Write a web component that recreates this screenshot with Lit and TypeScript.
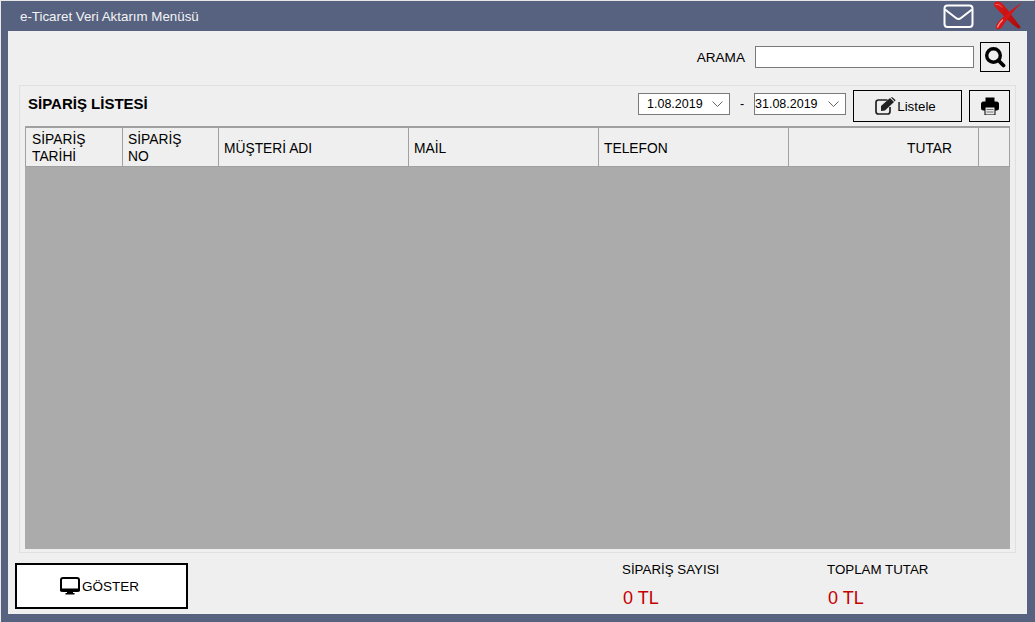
import { LitElement, html, css, svg } from "lit";
import { customElement } from "lit/decorators.js";

const cols = [
  { label: "SİPARİŞ TARİHİ", w: 97, cls: "" },
  { label: "SİPARİŞ NO", w: 96, cls: "" },
  { label: "MÜŞTERİ ADI", w: 190, cls: "" },
  { label: "MAİL", w: 190, cls: "" },
  { label: "TELEFON", w: 190, cls: "" },
  { label: "TUTAR", w: 190, cls: "right" },
  { label: "", w: 30, cls: "" },
];

const mail = svg`<svg width="31" height="25" viewBox="0 0 31 25"><rect x="1.500" y="1.500" width="28" height="21.500" rx="3" fill="none" stroke="#fff" stroke-width="2"/><path d="M2 5.500l11 8.500q2.500 2 5 0L29 5.500" fill="none" stroke="#fff" stroke-width="2"/></svg>`;
const cross = svg`<svg width="30" height="30" viewBox="0 0 30 30"><defs><linearGradient id="xg" x1="0" y1="0" x2="1" y2="1"><stop offset="0" stop-color="#e01818"/><stop offset="1" stop-color="#a80c0c"/></linearGradient></defs><path d="M1 3C1 1 4 0 7 1C12 4 18 14 27 25C28 27 26.500 28 24.500 27C18 23 10 14 3 7C2 6 1 5 1 3Z" fill="url(#xg)"/><path d="M29 1.500C22 6 14 12 8 18C5 21 2 25 3 27C4 29 7 28.500 9 26C13 20 22 8 29 1.500Z" fill="#d81414"/><path d="M4.500 26C5.500 23 7.500 21 9.500 19" stroke="#f79a9a" stroke-width="1.300" fill="none" stroke-linecap="round"/><path d="M3 3.500C5 3 7 4 9 6" stroke="#f06868" stroke-width="1" fill="none" stroke-linecap="round"/></svg>`;
const search = svg`<svg width="22" height="22" viewBox="0 0 22 22"><circle cx="9.500" cy="9.500" r="6.800" fill="none" stroke="#000" stroke-width="3.400"/><path d="M14.500 14.500L19.500 19.500" stroke="#000" stroke-width="3.800" stroke-linecap="round"/></svg>`;
const edit = svg`<svg width="21" height="18" viewBox="0 0 21 18"><path d="M12.500 3H3.500Q1 3 1 5.500V14.500Q1 17 3.500 17H12.500Q15 17 15 14.500V10" fill="none" stroke="#222" stroke-width="1.700"/><path d="M6 9L15 1L19 5L10 13.500L6 14Z" fill="#222"/><path d="M16 0.500L17 0L20.500 3L19.800 4.500Z" fill="#222"/></svg>`;
const printer = svg`<svg width="18" height="18" viewBox="0 0 18 18"><path d="M4.500 0.500H13.500V6H4.500Z" fill="#000"/><rect x="0" y="4.500" width="18" height="9" rx="2.500" fill="#000"/><path d="M4 10H14V18H4Z" fill="#e8e8e8" stroke="#000" stroke-width="1"/><path d="M5.500 12.500H12.500M5.500 15H12.500" stroke="#777" stroke-width="1"/></svg>`;
const monitor = svg`<svg width="20" height="18" viewBox="0 0 20 18"><rect x="1" y="1" width="18" height="13" rx="2" fill="#fff" stroke="#000" stroke-width="2"/><rect x="0" y="11.500" width="20" height="3" rx="1" fill="#000"/><path d="M7 14H13V16H14.500V17.500H5.500V16H7Z" fill="#000"/></svg>`;

@customElement("app-root")
export class AppRoot extends LitElement {
  static styles = css`
    :host {
      display: block;
      width: 1035px;
      height: 622px;
      font-family: "Liberation Sans", Arial, sans-serif;
      font-size: 13.330px;
      color: #000;
    }
    .window {
      box-sizing: border-box;
      width: 1035px;
      height: 622px;
      background: #566280;
      border-top: 1px solid #e8e8e8;
      border-left: 1px solid #e8e8e8;
      border-right: 1px solid #566280;
      display: flex;
      flex-direction: column;
    }
    .titlebar {
      height: 30px;
      flex: none;
      display: flex;
      align-items: center;
      padding: 0 11px 0 19px;
      color: #f4f4f4;
      font-size: 13.330px;
    }
    .title { flex: 1; padding-top: 1px; }
    .tb-icons { display: flex; align-items: center; gap: 19px; }
    .tb-icons svg { display: block; }
    .client {
      flex: none;
      height: 583px;
      margin: 0 7px;
      background: #efefef;
      display: flex;
      flex-direction: column;
      position: relative;
    }
    .searchrow {
      height: 54px;
      box-sizing: border-box;
      flex: none;
      display: flex;
      align-items: center;
      justify-content: flex-end;
      padding: 0 17px 2px 0;
    }
    .searchrow .lbl { margin-right: 10px; font-size: 13.600px; }
    .searchbox {
      box-sizing: border-box;
      width: 219px;
      height: 22px;
      background: #fff;
      border: 1px solid #7a7a7a;
      margin-right: 6px;
    }
    .iconbtn {
      box-sizing: border-box;
      width: 30px;
      height: 30px;
      border: 1px solid #000;
      background: #efefef;
      display: flex;
      align-items: center;
      justify-content: center;
      padding: 0;
    }
    .panel {
      box-sizing: border-box;
      margin: 0 11px;
      height: 468px;
      flex: none;
      border: 1px solid #e0e0e0;
      display: flex;
      flex-direction: column;
      padding: 0 5px 3px 5px;
    }
    .panelhead {
      height: 40px;
      flex: none;
      display: flex;
      align-items: center;
    }
    .heading {
      flex: 1;
      font-weight: bold;
      font-size: 15px;
      padding: 0 0 6px 3px;
    }
    .date {
      box-sizing: border-box;
      width: 92px;
      height: 22px;
      background: #fff;
      border: 1px solid #7a7a7a;
      display: flex;
      align-items: center;
      font-size: 12.500px;
      position: relative;
      margin-top: -5px;
    }
    .date.first { padding-left: 8px; }
    .date.second { padding-left: 0; }
    .chev { position: absolute; right: 6px; top: 7px; }
    .dash { width: 24px; text-align: center; font-size: 12.500px; margin-top: -5px; }
    .listbtn {
      box-sizing: border-box;
      width: 109px;
      height: 32px;
      margin-left: 7px;
      border: 1px solid #000;
      background: #efefef;
      display: flex;
      align-items: center;
      justify-content: center;
      gap: 1px;
      font: inherit;
      font-size: 13.330px;
      padding: 0 4px 0 0;
    }
    .printbtn {
      box-sizing: border-box;
      width: 41px;
      height: 32px;
      margin-left: 7px;
      border: 1px solid #000;
      background: #efefef;
      display: flex;
      align-items: center;
      justify-content: center;
      padding: 0;
    }
    .grid {
      flex: 1;
      background: #ababab;
      display: flex;
      flex-direction: column;
    }
    .gridhead {
      box-sizing: border-box;
      height: 41px;
      border-style: solid;
      border-color: #a0a0a0;
      border-width: 2px 1px 0 1px;
      display: flex;
      background: #efefef;
    }
    .gridhead .cell {
      box-sizing: border-box;
      flex: none;
      border-right: 1px solid #a0a0a0;
      border-bottom: 1px solid #a0a0a0;
      padding: 2px 15px 0 6px;
      display: flex;
      align-items: center;
      font-size: 13.800px;
      line-height: 17px;
    }
    .gridhead .cell + .cell { padding-left: 5px; }
    .gridhead .cell.right { justify-content: flex-end; padding: 2px 26px 0 0; }
    .gridhead .cell:last-child { border-right: 0; }
    .foot {
      flex: 1;
      display: flex;
      align-items: flex-start;
      padding: 10px 0 0 7px;
    }
    .goster {
      box-sizing: border-box;
      flex: none;
      width: 173px;
      height: 46px;
      background: #fff;
      border: 2px solid #000;
      display: flex;
      align-items: center;
      justify-content: center;
      gap: 2px;
      font: inherit;
      font-size: 13.500px;
      padding: 0 4px 0 0;
    }
    .stats { display: flex; margin-left: 434px; }
    .stat { width: 205px; }
    .stat .name { font-size: 13.330px; height: 18px; line-height: 18px; margin-top: -2px; }
    .stat .val {
      color: #c40000;
      font-size: 18px;
      line-height: 20px;
      margin-top: 9px;
      padding-left: 1px;
    }
  `;

  render() {
    const chev = svg`<svg class="chev" width="11" height="7" viewBox="0 0 11 7"><path d="M0.500 0.500L5.500 5.500L10.500 0.500" fill="none" stroke="#666" stroke-width="1"/></svg>`;
    return html`
      <div class="window">
        <div class="titlebar">
          <div class="title">e-Ticaret Veri Aktarım Menüsü</div>
          <div class="tb-icons">${mail}${cross}</div>
        </div>
        <div class="client">
          <div class="searchrow">
            <span class="lbl">ARAMA</span>
            <div class="searchbox"></div>
            <button class="iconbtn">${search}</button>
          </div>
          <div class="panel">
            <div class="panelhead">
              <div class="heading">SİPARİŞ LİSTESİ</div>
              <div class="date first">1.08.2019${chev}</div>
              <div class="dash">-</div>
              <div class="date second">31.08.2019${chev}</div>
              <button class="listbtn">${edit}<span>Listele</span></button>
              <button class="printbtn">${printer}</button>
            </div>
            <div class="grid">
              <div class="gridhead">
                ${cols.map(
                  (c) => html`<div class="cell ${c.cls}" style="width:${c.w}px"><span>${c.label}</span></div>`
                )}
              </div>
            </div>
          </div>
          <div class="foot">
            <button class="goster">${monitor}<span>GÖSTER</span></button>
            <div class="stats">
              <div class="stat"><div class="name">SİPARİŞ SAYISI</div><div class="val">0 TL</div></div>
              <div class="stat"><div class="name">TOPLAM TUTAR</div><div class="val">0 TL</div></div>
            </div>
          </div>
        </div>
      </div>
    `;
  }
}
